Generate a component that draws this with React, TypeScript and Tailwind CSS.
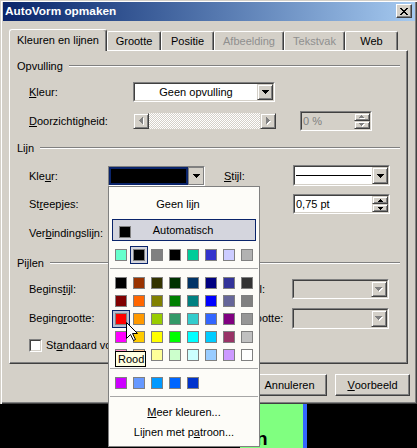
import React from "react";

type P = { className?: string; children?: React.ReactNode };

const PATHS = {
  down7: { w: 7, h: 4, d: "M0 0H7V1H6V2H5V3H4V4H3V3H2V2H1V1H0Z" },
  up5: { w: 5, h: 3, d: "M2 0H3V1H4V2H5V3H0V2H1V1H2Z" },
  down5: { w: 5, h: 3, d: "M0 0H5V1H4V2H3V3H2V2H1V1H0Z" },
  left4: { w: 4, h: 7, d: "M3 0H4V7H3V6H2V5H1V4H0V3H1V2H2V1H3Z" },
  right4: { w: 4, h: 7, d: "M0 0H1V1H2V2H3V3H4V4H3V5H2V6H1V7H0Z" },
};

function Arrow({ k, disabled }: { k: keyof typeof PATHS; disabled?: boolean }) {
  const p = PATHS[k];
  const w = p.w + (disabled ? 1 : 0);
  const h = p.h + (disabled ? 1 : 0);
  return (
    <svg className="block" width={w} height={h} viewBox={`0 0 ${w} ${h}`} shapeRendering="crispEdges">
      {disabled && <path d={p.d} fill="#ffffff" transform="translate(1 1)" />}
      <path d={p.d} fill={disabled ? "#808080" : "#000000"} />
    </svg>
  );
}

function U({ children }: P) {
  return <span className="underline">{children}</span>;
}

function Raised({ className = "", children }: P) {
  return (
    <div
      className={`flex items-center justify-center bg-[#d4d0c8] border border-t-[#d4d0c8] border-l-[#d4d0c8] border-r-[#404040] border-b-[#404040] shadow-[inset_1px_1px_#ffffff,inset_-1px_-1px_#808080] ${className}`}
    >
      {children}
    </div>
  );
}

function PushButton({ className = "", children }: P) {
  return (
    <div
      className={`flex items-center justify-center shrink-0 bg-[#d4d0c8] border border-t-white border-l-white border-r-[#404040] border-b-[#404040] shadow-[inset_-1px_-1px_#808080] ${className}`}
    >
      {children}
    </div>
  );
}

function Sunken({ className = "", inner = "bg-white", children }: P & { inner?: string }) {
  return (
    <div className={`shrink-0 border border-t-[#808080] border-l-[#808080] border-r-white border-b-white ${className}`}>
      <div
        className={`flex h-full w-full border border-t-[#404040] border-l-[#404040] border-r-[#d4d0c8] border-b-[#d4d0c8] ${inner}`}
      >
        {children}
      </div>
    </div>
  );
}

function Combo({ className = "", disabled, children }: P & { disabled?: boolean }) {
  return (
    <Sunken className={className} inner={disabled ? "bg-[#d4d0c8]" : "bg-white"}>
      <div className="flex-1 flex items-center justify-center min-w-0">{children}</div>
      <Raised className="w-[16px] h-full shrink-0">
        <Arrow k="down7" disabled={disabled} />
      </Raised>
    </Sunken>
  );
}

function Spin({ className = "", disabled, text }: { className?: string; disabled?: boolean; text: string }) {
  return (
    <Sunken className={className} inner={disabled ? "bg-[#d4d0c8]" : "bg-white"}>
      <div className={`flex-1 flex items-center pl-[1px] ${disabled ? "text-[#808080]" : "text-black"}`}>{text}</div>
      <div className="w-[16px] h-full flex flex-col shrink-0">
        <Raised className="flex-1">
          <Arrow k="up5" disabled={disabled} />
        </Raised>
        <Raised className="flex-1">
          <Arrow k="down5" disabled={disabled} />
        </Raised>
      </div>
    </Sunken>
  );
}

function Heading({ className = "", children }: P) {
  return (
    <div className={`h-[14px] flex items-center pl-[7px] pr-[7px] ${className}`}>
      <span className="shrink-0">{children}</span>
      <div className="flex-1 ml-[6px] border-t border-t-[#808080] border-b border-b-white" />
    </div>
  );
}

function CloseX() {
  const px: [number, number][] = [];
  const rows = ["xx....xx", ".xx..xx.", "..xxxx..", "...xx...", "..xxxx..", ".xx..xx.", "xx....xx"];
  rows.forEach((r, y) => r.split("").forEach((c, x) => c === "x" && px.push([x, y])));
  return (
    <svg className="block" width="8" height="7" viewBox="0 0 8 7" shapeRendering="crispEdges">
      {px.map(([x, y]) => (
        <rect key={`${x}-${y}`} x={x} y={y} width="1" height="1" fill="#000" />
      ))}
    </svg>
  );
}

const TOP = ["#66ffcc", "#000000", "#808080", "#000000", "#00cc99", "#3333cc", "#ccccff", "#b2b2b2"];
const GRID = [
  ["#000000", "#993300", "#333300", "#003300", "#003366", "#000080", "#333399", "#333333"],
  ["#800000", "#ff6600", "#808000", "#008000", "#008080", "#0000ff", "#666699", "#808080"],
  ["#ff0000", "#ff9900", "#99cc00", "#339966", "#33cccc", "#3366ff", "#800080", "#969696"],
  ["#ff00ff", "#ffcc00", "#ffff00", "#00ff00", "#00ffff", "#00ccff", "#993366", "#c0c0c0"],
  ["#ff99cc", "#ffcc99", "#ffff99", "#ccffcc", "#ccffff", "#99ccff", "#cc99ff", "#ffffff"],
];
const RECENT = ["#cc00ff", "#6699ff", "#0099ff", "#0066ff", "#0033cc"];

function Cell({ color, mode }: { color: string; mode?: "sel" | "hover" }) {
  const frame =
    mode === "sel"
      ? "border border-[#0a246a] bg-[#d4d5dd]"
      : mode === "hover"
      ? "border border-[#0a246a] bg-[#b6bdd2]"
      : "";
  return (
    <div className={`w-[18px] h-[18px] shrink-0 flex items-center justify-center ${frame}`}>
      <div className="w-[12px] h-[12px] border border-[#808080]" style={{ backgroundColor: color }} />
    </div>
  );
}

function Sep() {
  return (
    <div className="h-[10px] pt-[4px] px-[1px]">
      <div className="h-px bg-[#a6a6a6]" />
    </div>
  );
}

const tabBase =
  "h-[19px] shrink-0 flex items-center justify-center bg-[#d4d0c8] border-l border-t border-l-white border-t-white border-r border-r-[#404040] rounded-t-[2px] shadow-[inset_-1px_0_#808080]";

export default function App() {
  return (
    <div className="relative w-[417px] h-[448px] overflow-hidden bg-black font-['Liberation_Sans',Arial,sans-serif] text-[11px] leading-[13px] text-black">
      {/* Window */}
      <div className="h-[404px] flex flex-col bg-[#d4d0c8] pt-[2px] pl-[3px] pr-[2px] shadow-[inset_1px_1px_#d4d0c8,inset_2px_2px_#ffffff,inset_-1px_-1px_#404040,inset_-2px_-2px_#808080]">
        {/* Title bar */}
        <div className="h-[19px] shrink-0 flex items-start justify-between bg-gradient-to-r from-[#0a246a] to-[#a6caf0]">
          <div className="pl-[2px] h-full flex items-center text-white font-bold text-[11.8px]">AutoVorm opmaken</div>
          <PushButton className="mt-[2px] mr-[3px] w-[16px] h-[14px]">
            <CloseX />
          </PushButton>
        </div>

        {/* Tabs */}
        <div className="mt-[8px] ml-[6px] h-[21px] shrink-0 flex items-end">
          <div className="relative z-10 w-[98px] h-[22px] -mb-px shrink-0 flex items-center justify-center bg-[#d4d0c8] border-l border-t border-l-white border-t-white border-r border-r-[#404040] rounded-t-[3px] shadow-[inset_-1px_0_#808080]">
            Kleuren en lijnen
          </div>
          <div className={`${tabBase} w-[54px]`}>Grootte</div>
          <div className={`${tabBase} w-[53px]`}>Positie</div>
          <div className={`${tabBase} w-[70px] text-[#8f8f8f]`}>Afbeelding</div>
          <div className={`${tabBase} w-[61px] text-[#8f8f8f]`}>Tekstvak</div>
          <div className={`${tabBase} w-[53px]`}>Web</div>
        </div>

        {/* Panel */}
        <div className="ml-[6px] w-[399px] h-[314px] shrink-0 flex flex-col border border-t-white border-l-white border-r-[#404040] border-b-[#404040] shadow-[inset_-1px_-1px_#808080]">
          <Heading className="mt-[8px]">Opvulling</Heading>

          <div className="mt-[9px] h-[20px] flex items-center pl-[19px]">
            <div className="w-[104px] shrink-0">
              <U>K</U>leur:
            </div>
            <Combo className="w-[142px] h-[20px]">Geen opvulling</Combo>
          </div>

          <div className="mt-[9px] h-[20px] flex items-center pl-[19px]">
            <div className="w-[104px] shrink-0">
              <U>D</U>oorzichtigheid:
            </div>
            <div className="w-[143px] h-[16px] shrink-0 flex">
              <Raised className="w-[16px] h-full shrink-0">
                <Arrow k="left4" disabled />
              </Raised>
              <div className="flex-1 bg-[image:repeating-conic-gradient(#d4d0c8_0%_25%,#ffffff_0%_50%)] bg-[length:2px_2px]" />
              <Raised className="w-[16px] h-full shrink-0">
                <Arrow k="right4" disabled />
              </Raised>
            </div>
            <Spin className="ml-[24px] w-[72px] h-[20px]" disabled text="0 %" />
          </div>

          <Heading className="mt-[10px]">Lijn</Heading>

          <div className="mt-[10px] h-[22px] flex items-start pl-[19px]">
            <div className="w-[79px] h-full shrink-0 flex items-center">
              Kle<U>u</U>r:
            </div>
            <div className="mt-[1px] w-[97px] h-[20px] shrink-0 flex border border-t-[#808080] border-l-[#808080] border-r-white border-b-white">
              <div className="flex-1 border-2 border-[#0a246a] bg-black" />
              <div className="w-[16px] shrink-0 flex items-center justify-center border border-[#808080] bg-[#d4d0c8]">
                <Arrow k="down7" />
              </div>
            </div>
            <div className="ml-[19px] w-[69px] h-full shrink-0 flex items-center">
              <U>S</U>tijl:
            </div>
            <Sunken className="w-[97px] h-[21px]">
              <div className="flex-1 flex items-center px-[1px]">
                <div className="w-full h-px bg-black" />
              </div>
              <Raised className="w-[16px] h-full shrink-0">
                <Arrow k="down7" />
              </Raised>
            </Sunken>
          </div>

          <div className="mt-[7px] h-[20px] flex items-center pl-[19px]">
            <div className="w-[264px] shrink-0">
              St<U>r</U>eepjes:
            </div>
            <Spin className="w-[97px] h-[20px]" text="0,75 pt" />
          </div>

          <div className="mt-[9px] h-[20px] flex items-center pl-[19px]">
            <div className="w-[79px] shrink-0">
              Ver<U>b</U>indingslijn:
            </div>
            <Combo className="w-[97px] h-[20px]"> </Combo>
          </div>

          <Heading className="mt-[13px]">Pijlen</Heading>

          <div className="mt-[9px] h-[20px] flex items-center pl-[19px]">
            <div className="w-[79px] shrink-0">
              Begins<U>t</U>ijl:
            </div>
            <Combo className="w-[97px] h-[20px]"> </Combo>
            <div className="ml-[19px] w-[68px] shrink-0">Eindstijl:</div>
            <Combo className="w-[97px] h-[20px]" disabled> </Combo>
          </div>

          <div className="mt-[9px] h-[21px] flex items-center pl-[19px]">
            <div className="w-[79px] shrink-0">
              Beging<U>r</U>ootte:
            </div>
            <Combo className="w-[97px] h-[21px]"> </Combo>
            <div className="ml-[19px] w-[68px] shrink-0">Eindgrootte:</div>
            <Combo className="w-[97px] h-[21px]" disabled> </Combo>
          </div>

          <div className="mt-[10px] h-[13px] flex items-center pl-[19px]">
            <Sunken className="w-[13px] h-[13px]" />
            <div className="ml-[4px]">
              St<U>a</U>ndaard voor nieuwe objecten
            </div>
          </div>
        </div>

        {/* Buttons */}
        <div className="mt-[10px] flex justify-end gap-[8px] pr-[5px]">
          <PushButton className="w-[75px] h-[22px]">OK</PushButton>
          <PushButton className="w-[75px] h-[22px]">Annuleren</PushButton>
          <PushButton className="w-[75px] h-[22px]">
            <U>V</U>oorbeeld
          </PushButton>
        </div>
      </div>

      {/* Background document strip */}
      <div className="h-[44px] flex">
        <div className="w-[240px] bg-black" />
        <div className="w-[63px] bg-[#80ff80] pl-[16px] pt-[25px] font-bold text-[19px] leading-[19px]">n</div>
        <div className="w-[4px] bg-[#3366ff]" />
        <div className="flex-1 bg-black" />
      </div>

      {/* Colour popup */}
      <div className="absolute left-[108px] top-[186px] z-20 w-[152px] h-[261px] flex flex-col border border-[#808080] bg-[#fdfcf8]">
        <div className="mt-[3px] h-[28px] flex items-center justify-center pr-[12px]">Geen lijn</div>
        <div className="mt-[1px] mx-[3px] h-[22px] flex items-center border border-[#0a246a] bg-[#d4d5dd]">
          <div className="self-start mt-[6px] ml-[6px] w-[12px] h-[12px] shrink-0 border border-[#808080] bg-black" />
          <div className="flex-1 text-center pr-[20px]">Automatisch</div>
        </div>
        <div className="mt-[5px] mx-[3px] flex">
          {TOP.map((c, i) => (
            <Cell key={i} color={c} mode={i === 1 ? "sel" : undefined} />
          ))}
        </div>
        <Sep />
        <div className="mx-[3px] flex flex-col">
          {GRID.map((row, r) => (
            <div key={r} className="flex">
              {row.map((c, i) => (
                <Cell key={i} color={c} mode={r === 2 && i === 0 ? "hover" : undefined} />
              ))}
            </div>
          ))}
        </div>
        <Sep />
        <div className="mx-[3px] flex">
          {RECENT.map((c, i) => (
            <Cell key={i} color={c} />
          ))}
        </div>
        <Sep />
        <div className="h-[20px] flex items-center justify-center">
          <span>
            <U>M</U>eer kleuren...
          </span>
        </div>
        <div className="h-[20px] flex items-center justify-center">
          <span>
            Lijnen met p<U>a</U>troon...
          </span>
        </div>
      </div>

      {/* Tooltip */}
      <div className="absolute left-[115px] top-[351px] z-30 w-[31px] h-[16px] flex items-center pl-[2px] border border-black bg-[#ffffe1]">
        Rood
      </div>

      {/* Mouse cursor */}
      <svg className="absolute left-[126px] top-[322px] z-40" width="12" height="20" viewBox="0 0 12 20">
        <path d="M0.5 0.5V16.5L4.5 12.5L7.5 18.5L9.5 17.5L6.5 11.5H11.5Z" fill="#ffffff" stroke="#000000" strokeWidth="1" strokeLinejoin="miter" />
      </svg>
    </div>
  );
}
